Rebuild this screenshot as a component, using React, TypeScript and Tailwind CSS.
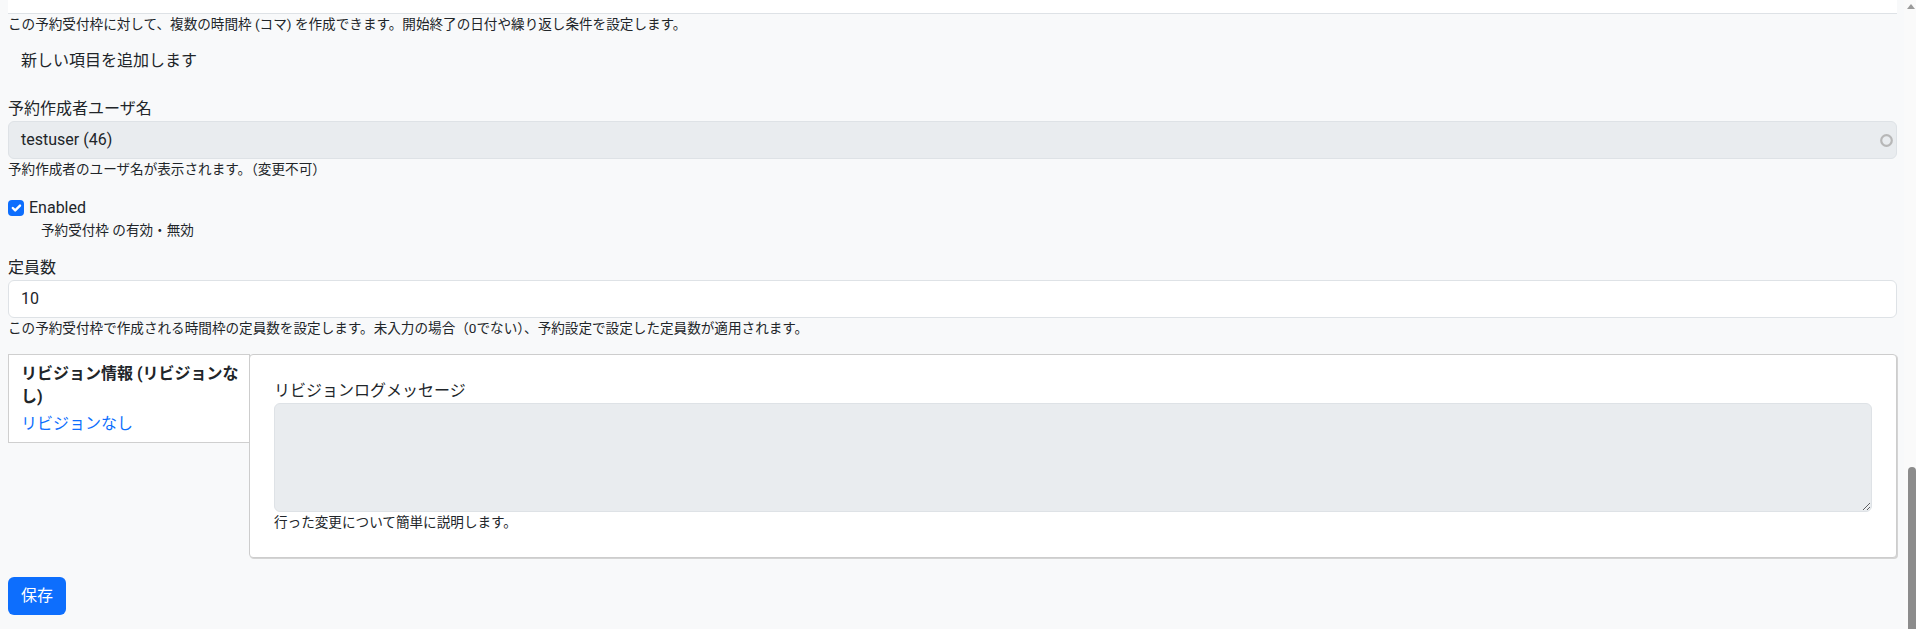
import React from "react";

const font = { fontFamily: 'Roboto, "Noto Sans CJK JP", sans-serif' };

export default function App() {
  return (
    <div
      className="flex h-[629px] w-[1916px] overflow-hidden bg-[#f8f9fa] text-[#212529]"
      style={font}
    >
      <main className="flex-1 pl-2 pr-[7px]">
        <div className="h-[14px] border-b border-[#dee2e6] bg-white" />
        <p className="text-[13.6px] leading-5">
          この予約受付枠に対して、複数の時間枠 (コマ) を作成できます。開始終了の日付や繰り返し条件を設定します。
        </p>
        <button
          type="button"
          className="mt-2 flex h-[38px] items-center border border-transparent px-3 text-[16px] leading-6"
        >
          新しい項目を追加します
        </button>

        <label className="mt-[17px] block text-[16px] leading-6">予約作成者ユーザ名</label>
        <div className="flex h-[38px] items-center justify-between rounded-[6px] border border-[#dee2e6] bg-[#e9ecef] pl-3 pr-[2px] text-[16px]">
          <span>testuser (46)</span>
          <svg width="15" height="15" viewBox="0 0 15 15">
            <circle cx="7.5" cy="7.5" r="5.3" fill="none" stroke="#b7b7b7" strokeWidth="2.2" />
          </svg>
        </div>
        <p className="text-[13.6px] leading-5">予約作成者のユーザ名が表示されます。（変更不可）</p>

        <div className="mt-[17px] flex items-center gap-[5px] text-[16px] leading-6">
          <span className="flex h-4 w-4 items-center justify-center rounded-[4px] bg-[#0d6efd]">
            <svg width="16" height="16" viewBox="0 0 20 20">
              <path
                d="m6 10 3 3 6-6"
                fill="none"
                stroke="#fff"
                strokeWidth="3"
                strokeLinecap="round"
                strokeLinejoin="round"
              />
            </svg>
          </span>
          <span>Enabled</span>
        </div>
        <p className="pl-[33px] text-[13.6px] leading-5">予約受付枠 の有効・無効</p>

        <label className="mt-4 block text-[16px] leading-6">定員数</label>
        <div className="flex h-[38px] items-center rounded-[6px] border border-[#dee2e6] bg-white px-3 text-[16px]">
          10
        </div>
        <p className="text-[13.6px] leading-5">
          この予約受付枠で作成される時間枠の定員数を設定します。未入力の場合（0でない）、予約設定で設定した定員数が適用されます。
        </p>

        <div className="mt-4 flex items-start">
          <div className="w-[242px] shrink-0 border border-[#cfcfcf] bg-white px-3 pb-[6px] pt-[7px]">
            <div className="mb-1 whitespace-nowrap text-[16px] font-bold leading-[23px]">
              リビジョン情報 (リビジョンな
              <br />
              し)
            </div>
            <a href="#" className="block text-[16px] leading-6 text-[#0d6efd]">
              リビジョンなし
            </a>
          </div>
          <div className="-ml-px flex-1 rounded-[4px] border border-[#cdcdcd] bg-white p-6 shadow-[1px_1px_0_#d4d4d4]">
            <label className="block text-[16px] leading-6">リビジョンログメッセージ</label>
            <textarea
              readOnly
              className="block h-[109px] w-full resize-y rounded-[6px] border border-[#dee2e6] bg-[#e9ecef] outline-none"
            />
            <p className="text-[13.6px] leading-[21px]">行った変更について簡単に説明します。</p>
          </div>
        </div>

        <button
          type="button"
          className="mt-[19px] flex h-[38px] w-[58px] items-center justify-center rounded-[6px] bg-[#0d6efd] text-[16px] text-white"
        >
          保存
        </button>
      </main>

      <div className="flex w-[12px] shrink-0 flex-col bg-[#fafafa]">
        <div className="flex justify-end pr-[1px] pt-[4px]">
          <svg width="8" height="5" viewBox="0 0 8 5">
            <path d="M4 0 8 5H0z" fill="#9a9a9a" />
          </svg>
        </div>
        <div className="mt-[458px] flex flex-1 justify-end">
          <div className="w-[8px] rounded-t-full bg-[#8c8c8c]" />
        </div>
      </div>
    </div>
  );
}
